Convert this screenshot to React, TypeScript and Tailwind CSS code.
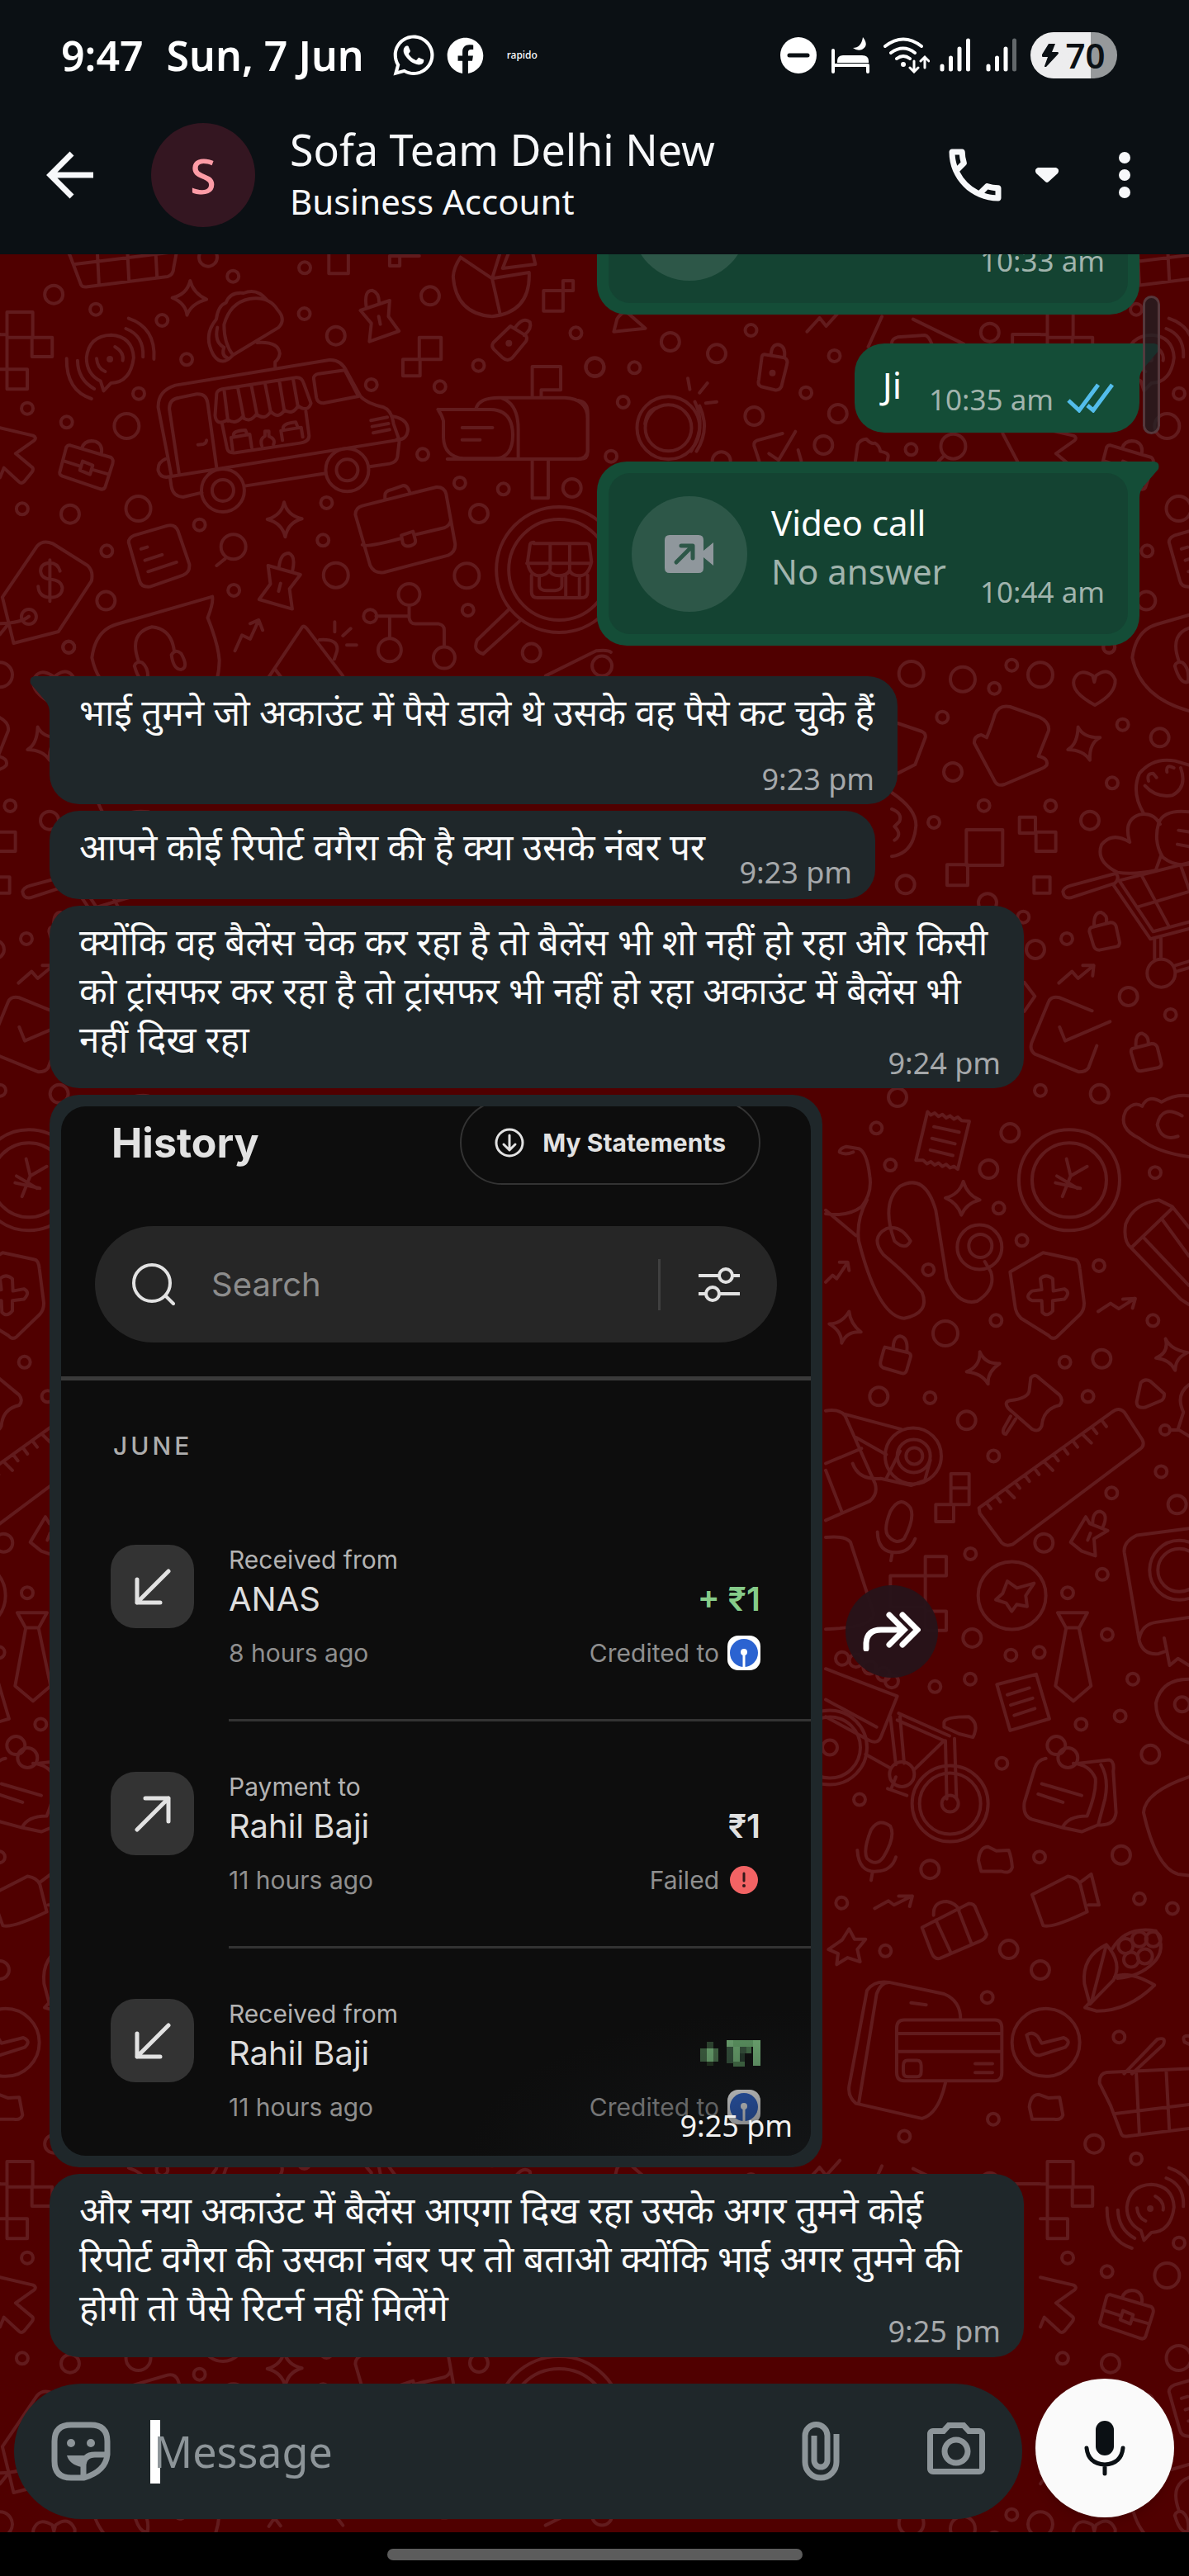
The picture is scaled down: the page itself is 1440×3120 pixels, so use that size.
import type { ReactNode } from "react";
import { FaFacebook, FaWhatsapp } from "react-icons/fa";
import { MdOutlineCall, MdOutlinePhotoCamera } from "react-icons/md";

type Sheet = {
  x: number;
  y: number;
  sx: number;
  sy: number;
  paths: string[];
  rings: [number, number, number][];
};

// Wallpaper doodles, grouped by the sheet they were sketched on.
// The whole set repeats every 1260 x 2240.
const SHEETS: Sheet[] = [
  {
    x: 0,
    y: 300,
    sx: 0.4719,
    sy: 0.3333,
    paths: [
      "M18 234h66v92h50v70h-52v-70h-64zM18 326v116h52v72h-52zM18 442H0M0 316h18",
      "M1076 326h56v80h-56zM1034 406h44v60h-44zM1395 156h50v74h-50zM1445 120h26v36h-26zM844 0v94h50V0M1000 30h26v36h-26zM1026 30h50",
      "M488 120q8 45 42 68q-40 16-50 57q-4-44-38-63q38-12 46-62z",
      "M729 925q8 48 46 60q-36 14-43 66q-8-50-46-64q36-14 43-62z",
      "M598 390L715 290Q735 260 712 225Q690 175 640 186Q590 200 575 280Q575 350 598 390Q570 435 548 390Q520 320 555 260Q560 210 580 200Q590 160 625 165Q660 145 685 190M660 345q55-5 58 40q-2 20-12 30v20",
      "M558 290q-8 50 14 70M575 362q-8 30 10 40",
      "M440 830L406 580Q405 520 450 500L845 408Q875 405 890 450L925 540Q940 565 985 580Q1005 590 1010 640L1025 700L1020 760Q1018 780 1000 785L948 796M836 820L628 866M518 890L470 906Q445 905 440 870L436 832L1025 698",
      "M460 825L435 590Q432 550 460 545L505 532Q530 530 533 565L556 800M508 716l14-2q8-4 8-14",
      "M805 475Q805 462 818 458L885 445L920 540L830 565Q815 565 812 545z",
      "M556 530Q558 518 570 514L760 472Q775 470 780 495L798 565Q790 600 765 575Q750 610 730 590Q715 625 695 595Q680 630 658 605Q640 640 622 615Q605 645 585 625Q555 650 552 610zM575 515l10 115M610 507l15 108M645 500l15 110M680 492l15 108M717 485l13 110M752 475l13 105",
      "M570 640L583 730Q586 748 605 745L770 710Q795 705 793 680L785 595M597 735l-4-45 48-12 5 48M600 685q-5-20 30-22l5 17M672 720q-6-25 8-35v-18h10v18q18 10 12 30M725 700l-4-35 52-12 4 35M727 660q-4-22 32-26l5 18",
      "M1005 612Q1045 620 1047 660Q1045 700 1018 697M952 628l42-12M955 650l42-11M958 673l42-12M425 768Q404 780 406 810Q412 840 436 832",
      "M1222 583Q1230 545 1280 545H1450Q1508 550 1508 620V745Q1508 768 1490 768H1148M1124 588H1260Q1315 590 1316 680Q1316 765 1270 766H1190Q1140 760 1138 690V630Q1135 610 1124 588M1290 548Q1330 570 1330 660V766M1186 654h78M1186 698h46M1366 545V432h73v85h-50v28M1366 770v140h41V770",
      "M912 970Q912 945 930 938L1120 870Q1140 868 1145 895L1168 1075Q1170 1105 1150 1118L985 1180Q960 1185 950 1155zM930 1080Q940 1090 1030 1056M1065 1043L1140 1018Q1155 1010 1157 990M1030 1045l4 30q6 14 20 8q14-6 12-20l-6-32zM988 915v-15q0-15 15-20l30-15q12-4 18 22",
      "M180 718L285 762Q292 770 289 785L270 870Q266 882 255 876L160 830Q150 824 154 812L170 725Q174 716 180 718M164 775l40 18M236 806l44 18M212 776l26 15-7 33-26-15zM210 728q8-32 35-24q20 12 15 46",
      "M95 1085Q110 1060 135 1075L225 1155Q240 1175 235 1210L150 1395L35 1437L6 1270zM128 1135v150M154 1175q-6-30-26-30q-24 2-24 30q2 28 26 30q28 4 30 32q-2 34-32 34q-28-2-30-40M74 1340q-20 24-74 26M20 1370L0 1405",
      "M330 1070Q330 1055 345 1045L430 1010Q450 1004 457 1030L486 1150Q488 1180 470 1190L385 1232Q362 1235 358 1210zM362 1095l16-7M372 1136l44-20M380 1177l73-34M578 1130L556 1155",
      "M925 228L1000 192L997 250L1024 303L948 341L953 275zM940 215q-6-60 15-60q18 8 18 45M972 250l4 28M688 1155L771 1188L743 1240L750 1313L665 1278L694 1222zM716 1160q4-50 25-50q18 10 10 62M720 1220l-5 28",
      "M258 485Q222 460 222 400Q228 320 285 317Q340 322 343 400Q335 490 285 492L266 520zM295 360q24 20 20 50M248 403q2 35 22 47M330 257Q400 290 395 405M323 294Q370 320 367 397M171 403Q170 520 235 549M199 410Q200 480 242 513",
      "M1310 285l40 35q4 10 0 20l-35 60q-12 16-25 0l-22-30q-8-12-2-25zM1322 290q20-40 38-20q6 25-15 48",
      "M1182 35L1263 112L1358 90Q1362 235 1263 250Q1170 240 1163 105Q1165 70 1182 35M1263 112L1283 238M1263 112L1282 25M1305 20L1290 75L1374 60L1368 25",
      "M1308 1312L1225 1425Q1212 1465 1240 1476L1335 1355M1370 1075h135q8 0 8 12l5 55q-8 50-30 50q-22 0-26-20q-6 20-27 20q-20 0-25-20q-8 20-28 20q-24-5-28-50l6-60q0-12 10-12zM1412 1077v90M1462 1077v90M1352 1147h165M1364 1190v60q0 22 16 22h112q16 0 16-22v-60M1384 1195v35q2 16 18 16h22q16-2 18-16v-35M1452 1195v76M1487 1192v78",
      "M545 1268Q548 1290 533 1345Q560 1440 563 1500Q560 1690 430 1698Q260 1660 236 1490Q245 1390 300 1368zM355 1500Q330 1400 390 1378Q440 1385 447 1465M345 1520q5-20 20-12q18 20 14 70q-20 10-34-58M440 1480q10-25 25-5q20 50 0 58q-20 0-25-53",
      "M603 1465L621 1408L642 1422L664 1353M642 1366l22-13 10 37",
      "M690 1560L775 1380Q780 1370 788 1385L880 1556M705 1530l15 28M820 1425Q870 1420 865 1465L858 1495M859 1360v36M880 1410l20-26M890 1444h25",
      "M1050 1305v40q2 22 16 22h60q14 4 14 22v56M965 1339h84M1000 1340v76",
      "M0 655L85 683Q95 690 88 700L40 748L84 800Q86 808 82 815L62 850Q54 860 48 850L10 800L0 835",
      "M180 30L208 135Q212 145 225 142L430 105Q445 100 446 70L470-110M180 30L152-50Q150-85 170-90L480-110M192 60L450 15M246-90l8 222M323-95l8 215M395-100l8 205M215-85L300-210Q325-220 315-190L235-85M480-130L370-200Q360-230 390-220L500-160",
      "M1400 1556L1530 1465Q1560 1460 1568 1470",
    ],
    rings: [
      [138, 170, 11], [1104, 175, 11], [862, 320, 11], [1527, 435, 11], [1468, 873, 11], [180, 968, 11],
      [1229, 966, 11], [272, 1283, 11], [1364, 1472, 11], [534, 35, 11], [325, 648, 15], [355, 948, 15],
      [862, 1190, 15], [1198, 1192, 15], [599, 1087, 15], [1050, 1260, 13], [1000, 1462, 14], [1140, 1490, 13],
      [246, 224, 7], [416, 264, 7], [598, 104, 7], [782, 73, 7], [781, 240, 7], [479, 406, 7], [356, 530, 7],
      [70, 584, 7], [171, 634, 7], [1478, 310, 7], [1228, 428, 7], [953, 498, 7], [1129, 505, 7], [1085, 751, 7],
      [57, 949, 7], [512, 1007, 7], [838, 927, 7], [829, 1063, 7], [1180, 855, 7], [1292, 877, 7], [274, 1102, 7],
      [600, 1245, 7], [1201, 1317, 7], [176, 1451, 7], [950, 1339, 8], [572, 882, 26], [572, 882, 13],
      [891, 808, 26], [891, 808, 13], [74, 1341, 9], [1435, 1170, 76], [1435, 1170, 61], [282, 405, 2],
      [1306, 347, 2], [1545, 1520, 12],
    ],
  },
  {
    x: 700,
    y: 300,
    sx: 0.4719,
    sy: 0.3333,
    paths: [
      "M282 475l5 40M332 492l-20 35M356 560l-28 5M172 640q5-50 30-58M300 560q30 90-10 180M312 575q28 85-8 165",
      "M478 388L530 400Q540 408 536 425L522 505Q516 520 505 517L470 505Q460 498 464 480L472 395Q474 388 478 388M495 390q2-38 18-38q20 4 17 45",
      "M92 305L173 293L130 240Q115 225 100 260zM588 305L620 255L637 285L672 230M780 250L745 360M860 260L990 350M805 350Q805 330 820 325L890 318Q900 320 908 350M1186 315h-71v40",
      "M525 675L460 700Q450 705 452 720L465 775M558 668L515 772L490 748M565 735l8 40",
      "M712 775l6-60q6-18 22-20q12 20 22 15q12 10 14 30q22 5 20 20l-5 35M940 755l-15 22M1090 675l38 102",
      "M0 555Q25 560 25 600V740Q22 765 0 768",
    ],
    rings: [
      [444, 300, 7], [658, 393, 7], [145, 436, 7], [116, 561, 7], [585, 527, 7], [855, 733, 7], [85, 758, 7],
      [43, 433, 11], [237, 342, 11], [356, 385, 11], [452, 612, 11], [667, 603, 11], [630, 717, 11],
      [1057, 308, 11], [368, 775, 11], [963, 722, 15], [232, 655, 38], [232, 655, 28], [499, 455, 2],
    ],
  },
  {
    x: 1080,
    y: 780,
    sx: 0.3333,
    sy: 0.3333,
    paths: [
      "M738 222Q650 175 662 130Q680 85 730 115L736 138L742 115Q790 80 812 130Q815 180 738 222",
      "M345 340Q365 290 375 255Q390 220 430 228L535 265Q575 285 570 315L533 408Q570 415 563 440Q555 450 540 455L410 510Q385 518 375 500L300 360Q298 335 325 330z",
      "M677 302q20 40 80 38q-40 20-37 82q-25-38-80-38q35-20 37-82",
      "M464 629h58v58h-58zM524 683h72v70h-72zM271 675h132v129h-132zM201 802h75v75h-75zM517 847h58v58h-58z",
      "M22 288L110 318Q125 325 122 340L85 438L22 470M0 540Q90 600 88 660Q80 760 0 772M0 600q40 15 28 45l-18 18q30 30 0 50",
      "M915 615Q870 540 900 470Q950 410 1030 425L1080 440M920 515Q960 560 1020 550Q1075 520 1050 450M933 498Q925 470 950 470l12 15M1000 465Q995 435 1025 450",
      "M960 822Q880 840 820 830Q740 790 762 730Q800 680 865 720Q840 640 900 620Q950 610 975 655M1080 610Q990 600 970 650Q950 720 985 775Q1030 810 1080 800M978 770L960 820M1042 677l38 6M1038 728l42 8",
      "M815 835Q830 850 810 870L650 922Q625 925 622 900Q625 885 650 878L810 835zM805 875L940 1072L1080 1035M830 865L950 1045L1080 1010M825 860L1080 795M910 845L1005 1022M895 955L1080 900M1050 805L1080 890M955 1070v75M978 1068v75M1030 1168l50-15M1035 1190l45-13",
      "M725 1030L795 1012Q810 1012 815 1025L828 1085Q828 1098 815 1100L755 1112Q738 1112 733 1095L718 1045Q718 1033 725 1030M735 1020Q735 975 760 975Q785 985 780 1012",
      "M875 1470L945 1452Q960 1452 965 1465L980 1525Q980 1538 967 1540L905 1552Q890 1552 885 1535L870 1485Q868 1473 875 1470M887 1460Q885 1415 910 1415Q935 1425 932 1452",
      "M607 1232L655 1190L677 1215L734 1168M694 1168h40l-4 38",
      "M728 1333L610 1285Q580 1278 570 1300L508 1450Q500 1475 520 1490L680 1555Q705 1555 715 1540L745 1460M610 1392L630 1442L793 1372M482 1230L520 1280L482 1335",
    ],
    rings: [
      [71, 108, 15], [258, 128, 15], [436, 77, 7], [540, 112, 15], [373, 161, 7], [184, 266, 7], [222, 465, 11],
      [839, 293, 7], [974, 340, 11], [801, 505, 7], [577, 588, 7], [335, 587, 7], [153, 648, 7], [720, 641, 11],
      [50, 874, 11], [348, 940, 11], [478, 992, 7], [522, 1110, 11], [636, 1071, 7], [860, 1281, 11],
      [1013, 1347, 7], [979, 1196, 17], [790, 12, 7],
    ],
  },
  {
    x: 1000,
    y: 1300,
    sx: 0.3333,
    sy: 0.829,
    paths: [
      "M875 125l15 25 60-14M890 150l-30 30M840 150l75 18M835 160l90 8",
      "M670 290L790 262L905 272Q920 273 923 285L939 335Q940 345 925 352L840 385Q825 390 810 383L710 358Q690 350 688 340zM780 300q20-8 45 0l2 18 40-3q25 5 0 15l-42 2v15q-20 10-38 2l-2-17-35 0q-30-5 0-14l35-2z",
      "M370 56l12 5 14-3 14 5 14-3 14 5 14-3 14 5 14-3 14 5 28 1L480 140l-14-4-14 2-14-5-14 3-14-5-14 3-14-5-14 3-14-5-26 0zM393 78l92 8M386 95l84 8M380 112l82 8",
      "M500 158q15 20 60 27q-50 5-67 22q-15-18-58-25q50-5 65-24M85 348q5 18 43 30q-50-2-70 16q0-18-45-28q45 0 72-18M560 407q20 18 72 17q-45 12-42 30q-22-16-78-18q50-8 48-29M1235 388q20 16 80 20q-45 8-45 26q-20-16-70-18q48-8 35-28",
      "M0 305l25-10 15 5 40-24M50 276h30l5 12M990 348l45-12 30 8 58-15M1080 330l45-1-10 14M178 1220l50-11 20 6 65-13M265 1202h50l-10 15",
      "M215 400L300 408Q312 410 308 415L295 433Q290 440 275 438L208 430Q195 427 200 420L210 405zM245 403q0-18 25-19q30 2 25 22",
      "M0 205Q80 210 130 195Q170 175 160 150Q150 115 120 110L75 107Q50 110 50 115Q70 120 100 115M0 200L110 237M150 185Q110 215 120 245Q190 355 285 358Q380 350 350 320Q300 295 210 265Q160 240 220 227Q270 220 308 245Q290 260 250 245Q200 190 270 165Q360 145 400 200L440 300Q480 340 550 333Q620 315 600 290L578 275",
      "M1320 122Q1200 115 1140 95Q1060 80 1090 55Q1120 40 1150 48Q1170 30 1220 42Q1270 30 1320 33M1295 62Q1220 45 1205 75Q1220 100 1280 92",
      "M1115 253L1260 197M1320 225L1260 195L1210 185Q1120 190 1090 220Q1080 245 1110 255L1290 330L1320 338M1155 240l165 70M1220 212l100 55",
      "M557 635L1040 495Q1065 487 1085 495L1150 535Q1160 543 1145 548L680 688Q655 692 640 686L560 643zM585 628l15 8M620 618l15 8M655 608l30 12M690 598l15 8M725 588l15 8M760 578l15 8M795 568l30 12M830 558l15 8M865 548l15 8M900 538l15 8M935 528l30 12M970 518l15 8M1005 508l15 8",
      "M745 445Q760 438 775 445L850 470Q865 478 850 485Q790 490 785 515Q775 525 750 520L665 490Q645 480 670 478Q740 475 740 462zM690 505l-35 22q-15 0-8-8l25-18",
      "M890 685L945 648L960 658L1025 668L975 680L980 705L930 698zM970 658q0-18 28-18q30 4 10 22M962 672l-10 10",
      "M660 742l35 10 62-7-30 18 5 16-38-3-18 10-20-12-38-5 25-9z",
      "M843 788h108l-30 22h-48zM873 812L835 895L900 917L964 895L921 812",
      "M622 893L765 878L813 943L670 960zM660 908l80-10M672 923l80-10M685 938l75-10",
      "M400 630h65v25h-65zM455 585h66v45h-66zM455 606h66M362 706h76v28h-76zM362 706v80h76v28h-76v-28M362 734H235v46h127",
      "M235 640Q270 615 308 635Q325 650 285 680Q255 690 225 675Q210 665 235 640M188 670Q190 700 255 700Q305 700 325 680M242 700l-5 12M165 1105q30-18 70-5q20 15-25 45q-25 15-60 2q-15-12 15-42M115 1135Q120 1168 185 1166Q240 1165 255 1145M170 1167l-5 12",
      "M0 493Q50 490 70 500L180 600Q190 615 160 625L0 653M70 498L275 520M110 532l110 25M0 570l130-22M0 580l60 62M98 570Q120 595 200 592L310 602L360 595L380 565M220 592l50-40",
      "M0 678Q70 675 90 685L175 790Q170 810 0 812",
      "M145 995L235 1015M235 940L255 1010M270 940L285 1008M260 945L430 975L320 1018M265 935L450 968M435 975L440 1060M468 972L475 1058M430 948Q435 940 520 940Q560 950 535 970L485 965L430 955zM225 1045l70 10M240 1043l15-15",
      "M0 870L260 910L200 970Q190 980 160 975L0 940M0 915L185 955",
      "M800 1001Q770 1003 760 1015L722 1065Q715 1085 750 1090L860 1102Q880 1085 950 1085Q985 1050 980 1030Q960 1010 900 1008M920 1008L1030 1003Q1050 1005 1045 1020L1055 1080Q1050 1100 990 1098L930 1108L860 1102M1000 1010Q1030 1030 1015 1060L990 1098M785 1038l145 17M772 1053l90 12",
      "M555 1150Q560 1130 590 1130L620 1136L665 1135Q675 1145 678 1160Q670 1170 640 1166L565 1166zM740 1510Q745 1492 775 1492L810 1497L850 1496L862 1522Q855 1530 830 1528L750 1528z",
      "M750 1200L880 1173Q915 1175 925 1185L950 1225Q820 1250 790 1245zM925 1182L965 1170L993 1215L955 1215",
      "M350 1248L520 1213Q540 1213 545 1220L585 1258Q580 1265 560 1268L415 1293Q395 1295 385 1285zM400 1237l55 48M480 1220l50 52M392 1230Q390 1210 440 1210Q470 1212 485 1222",
      "M10 1280l50-14 25-16 20 15h40l-30 15 10 18-45-6-40 10 5-16z",
      "M940 1330Q930 1290 1020 1273Q1080 1300 1045 1325L960 1360L940 1330M1020 1273Q990 1320 965 1358M1050 1320Q1100 1310 1195 1332Q1100 1370 985 1370L942 1365L965 1355M1040 1280Q1090 1245 1200 1253Q1240 1280 1190 1300Q1140 1320 1060 1322",
      "M258 1395Q258 1383 285 1383H615Q640 1383 640 1395V1460Q640 1472 615 1472H285Q258 1472 258 1460zM258 1403h382M258 1429h382M282 1450q0-8 15-8h35q15 0 15 8v8q0 8-15 8h-35q-15 0-15-8zM543 1447h63M543 1460h63M435 1475Q410 1520 350 1527L110 1505Q80 1495 85 1480L150 1340Q175 1325 230 1328L430 1345Q490 1355 490 1382M120 1505L185 1345Q200 1328 230 1328M310 1358l55 3",
      "M730 1405q20-6 40 2l15 10 80-8q30 5 5 14l-95 12q-20 0-30-10z",
      "M1320 665L1130 675Q1080 685 1085 700L1140 830Q1155 850 1210 848L1230 845M1140 825Q1150 805 1200 802L1320 795M1230 825l20 40 30-10 40 10",
      "M1320 978Q1200 960 1200 920Q1220 885 1320 885M1320 1028Q1160 1050 1155 1080Q1200 1160 1280 1170L1320 1172",
      "M1130 480L1145 452Q1160 445 1180 450L1230 468Q1232 475 1220 478L1160 488Q1130 490 1130 480M1320 455Q1270 470 1300 495L1280 520L1320 530M1250 521h30",
    ],
    rings: [
      [184, 80, 7], [235, 134, 7], [780, 25, 7], [629, 197, 7], [713, 244, 7], [1197, 145, 7], [993, 281, 7],
      [373, 287, 7], [619, 361, 7], [1189, 361, 7], [869, 422, 7], [379, 474, 7], [953, 472, 7], [610, 559, 7],
      [1219, 582, 7], [1039, 613, 7], [526, 702, 7], [1005, 732, 7], [879, 759, 7], [1023, 820, 7], [673, 850, 7],
      [776, 846, 7], [525, 885, 7], [397, 896, 7], [928, 951, 7], [1116, 885, 7], [1070, 939, 7], [640, 1008, 7],
      [123, 1061, 7], [777, 1145, 7], [58, 1212, 7], [217, 1282, 7], [1140, 1206, 7], [1260, 1220, 7],
      [587, 1350, 7], [1066, 1408, 7], [609, 1528, 7], [286, 1553, 7], [261, 35, 11], [995, 30, 11],
      [670, 87, 11], [592, 140, 11], [512, 507, 11], [1003, 417, 11], [793, 686, 11], [532, 825, 11],
      [1277, 630, 11], [379, 1163, 11], [1074, 1142, 11], [1180, 995, 11], [665, 1280, 11], [780, 1310, 11],
      [193, 472, 11], [435, 380, 15], [885, 156, 61], [885, 156, 45], [559, 254, 27], [562, 252, 14],
      [677, 763, 41], [318, 559, 34], [320, 559, 20], [322, 559, 10], [452, 1067, 46], [452, 1067, 37],
      [452, 1067, 10], [15, 985, 45], [15, 985, 37], [15, 985, 9], [277, 1024, 15], [60, 855, 8], [110, 858, 8],
      [160, 868, 8], [210, 878, 8], [240, 888, 8], [838, 982, 11], [880, 1000, 12], [1090, 1275, 9],
      [1140, 1265, 9], [1190, 1265, 9], [1110, 1295, 9], [1160, 1290, 9], [800, 1416, 41], [1285, 726, 36],
      [1285, 726, 26], [1295, 922, 9], [1233, 521, 6],
    ],
  },
];

function Wallpaper() {
  return (
    <svg className="absolute inset-0 w-full h-full" aria-hidden="true">
      <defs>
        <g id="doodles" fill="none" stroke="#621b1d" strokeWidth="4" strokeLinecap="round" strokeLinejoin="round">
          {SHEETS.map((s, i) => (
            <g key={i} transform={`translate(${s.x} ${s.y}) scale(${s.sx} ${s.sy})`}>
              {s.paths.map((d) => (
                <path key={d} d={d} vectorEffect="non-scaling-stroke" />
              ))}
              {s.rings.map(([x, y, r]) => (
                <ellipse key={`${x}-${y}-${r}`} cx={x} cy={y} rx={r / s.sx} ry={r / s.sy} vectorEffect="non-scaling-stroke" />
              ))}
            </g>
          ))}
        </g>
      </defs>
      <g transform="translate(0 -308)">
        <use href="#doodles" />
        <use href="#doodles" x="-1260" />
        <use href="#doodles" x="1260" />
        <use href="#doodles" y="2240" />
        <use href="#doodles" x="-1260" y="2240" />
        <use href="#doodles" x="1260" y="2240" />
      </g>
    </svg>
  );
}

function StatusBar() {
  return (
    <div className="h-[134px] pl-[74px] pr-[87px] flex items-center justify-between text-white">
      <div className="flex items-center">
        <span className="text-[50px] font-semibold">9:47</span>
        <span className="text-[50px] font-semibold ml-7">Sun, 7 Jun</span>
        <FaWhatsapp className="w-[56px] h-[56px] ml-8" />
        <FaFacebook className="w-[45px] h-[45px] ml-3" />
        <span className="text-[12px] ml-7 font-medium">rapido</span>
      </div>
      <div className="flex items-center">
        <svg viewBox="0 0 44 44" className="w-11 h-11">
          <circle cx="22" cy="22" r="22" fill="#fff" />
          <path d="M11 22h22" stroke="#0b1014" strokeWidth="5" strokeLinecap="round" />
        </svg>
        <svg viewBox="0 0 46 44" className="w-[46px] h-11 ml-[18px]" fill="#fff">
          <path d="M0 16q0-2 2-2t2 2v16h40q2 0 2 2v8q0 2-2 2t-2-2v-6H4v6q0 2-2 2t-2-2zM7 31v-2q0-7 7-7h23q8 0 8 7v2zM38 0q8 10-1 15q-6 2-11-2q10 0 12-13" />
        </svg>
        <svg viewBox="0 0 56 44" className="w-14 h-11 ml-[17px]" fill="none" stroke="#fff" strokeWidth="4" strokeLinecap="round">
          <path d="M2 11Q24-6 46 11M9 19Q24 8 38 19M16 26Q24 20 32 26" />
          <circle cx="24" cy="33" r="3" fill="#fff" stroke="none" />
          <path d="M37 29v11M32 37l5 5 5-5M50 37V25M45 29l5-5 5 5" strokeWidth="3" />
        </svg>
        <svg viewBox="0 0 38 42" className="w-[38px] h-[42px] ml-3" stroke="#fff" strokeWidth="5" strokeLinecap="round">
          <path d="M3 34v4M13.500 24v14M24 13v25M34.500 3v35" />
        </svg>
        <svg viewBox="0 0 38 42" className="w-[38px] h-[42px] ml-[18px]" stroke="#fff" strokeWidth="5" strokeLinecap="round">
          <path d="M3 34v4M13.500 24v14M24 13v25" />
          <path d="M34.500 3v35" stroke="#63686b" />
        </svg>
        <div className="ml-4 w-[105px] h-14 rounded-full bg-linear-to-r from-[#ededee] from-70% to-[#96999b] to-70% flex items-center justify-center gap-2 text-[#0b1014]">
          <svg viewBox="0 0 20 28" className="w-5 h-7" fill="currentColor">
            <path d="M8 0h8l-4 10h7q2 1 0 3L5 28q-2 1-2-1l4-11H1q-2-1-1-3z" />
          </svg>
          <span className="text-[42px] leading-[56px] font-semibold">70</span>
        </div>
      </div>
    </div>
  );
}

function ChatHeader() {
  return (
    <div className="h-[156px] mb-[18px] flex items-center text-[#f7f8fa]">
      <button aria-label="Back" className="ml-14 w-[58px] h-[58px]">
        <svg viewBox="0 0 58 58" fill="none" stroke="currentColor" strokeWidth="7">
          <path d="M57 29H6M31 3L5 29l26 26" />
        </svg>
      </button>
      <div className="ml-[69px] w-[126px] h-[126px] rounded-full bg-[#341621] text-[#fd9ba6] text-[58px] font-medium flex items-center justify-center">
        S
      </div>
      <div className="ml-[42px] pb-1 flex-1 flex flex-col">
        <h1 className="text-[52px] leading-[68px]">Sofa Team Delhi New</h1>
        <p className="text-[42px] leading-[58px]">Business Account</p>
      </div>
      <button aria-label="Call" className="flex items-center gap-[31px]">
        <MdOutlineCall className="w-[84px] h-[84px]" />
        <svg viewBox="0 0 28 18" className="w-7 h-[18px]" fill="currentColor">
          <path d="M3 0h22q5 2 2 7L16 17q-2 2-4 0L1 7Q-2 2 3 0" />
        </svg>
      </button>
      <button aria-label="More options" className="ml-[73px] mr-[71px] flex flex-col gap-[7px]">
        <span className="w-[14px] h-[14px] rounded-full bg-current" />
        <span className="w-[14px] h-[14px] rounded-full bg-current" />
        <span className="w-[14px] h-[14px] rounded-full bg-current" />
      </button>
    </div>
  );
}

function Tail({ side, className }: { side: "left" | "right"; className: string }) {
  return (
    <svg
      viewBox="0 0 26 44"
      className={side === "left" ? `absolute top-0 -left-6 w-[26px] h-11 ${className}` : `absolute top-0 -right-6 w-[26px] h-11 ${className}`}
      fill="currentColor"
    >
      {side === "left" ? <path d="M26 0H6Q-1 1 1 9L19 30Q24 36 24 44H26z" /> : <path d="M0 0h20q7 1 5 9L7 30Q2 36 2 44H0z" />}
    </svg>
  );
}

function CallCard({ time }: { time: string }) {
  return (
    <div className="relative self-end shrink-0 w-[657px] rounded-[36px] rounded-tr-none bg-[#144d37] p-[14px]">
      <Tail side="right" className="text-[#144d37]" />
      <div className="h-[195px] rounded-[26px] bg-[#144332] flex items-center px-7">
        <div className="w-[140px] h-[140px] rounded-full bg-[#2d5748] flex items-center justify-center">
          <svg viewBox="0 0 60 46" className="w-[60px] h-[46px]">
            <path d="M6 0h35q6 0 6 6v13L59 9v28L47 27v13q0 6-6 6H6q-6 0-6-6V6q0-6 6-6" fill="#8f979c" />
            <path d="M14 33L33 14M20 13h14v15" fill="none" stroke="#2d5748" strokeWidth="5" strokeLinecap="round" strokeLinejoin="round" />
          </svg>
        </div>
        <div className="ml-[29px] pb-[18px] flex-1 text-[42px] leading-[59px]">
          <p className="text-white">Video call</p>
          <p className="text-[#a1b4ad]">No answer</p>
        </div>
        <time className="self-end mb-[27px] text-[35px] leading-[48px] text-[#a1b4ad]">{time}</time>
      </div>
    </div>
  );
}

function Bubble({ lines, time, className, timeClass, tail }: { lines: string[]; time: string; className: string; timeClass: string; tail?: boolean }) {
  return (
    <div className={`relative self-start shrink-0 bg-[#1f272a] pl-9 pr-7 ${className}`}>
      {tail && <Tail side="left" className="text-[#1f272a]" />}
      <p className="text-[44px] leading-[59px] text-[#fafafa] whitespace-nowrap">
        {lines.map((line) => (
          <span key={line} className="block">
            {line}
          </span>
        ))}
      </p>
      <time className={`text-[36px] leading-[48px] text-[#a5a8aa] ${timeClass}`}>{time}</time>
    </div>
  );
}

function BankIcon() {
  return (
    <svg viewBox="0 0 40 42" className="w-10 h-[42px]">
      <rect width="40" height="42" rx="13" fill="#fff" />
      <circle cx="20" cy="21" r="17" fill="#2b63d1" />
      <path d="M20 20v18" stroke="#fff" strokeWidth="3" />
      <circle cx="20" cy="20" r="4" fill="#fff" />
    </svg>
  );
}

function FailedIcon() {
  return (
    <svg viewBox="0 0 40 42" className="w-10 h-[42px]">
      <circle cx="20" cy="21" r="17" fill="#f26364" />
      <path d="M20 13v9" stroke="#35191a" strokeWidth="3" strokeLinecap="round" />
      <circle cx="20" cy="28" r="2" fill="#35191a" />
    </svg>
  );
}

const MOSAIC: [number, number, number, number, string][] = [
  [0, 10, 8, 16, "#3d6040"], [8, 2, 8, 8, "#2f4731"], [8, 10, 8, 16, "#6da871"], [8, 26, 8, 5, "#22331f"], [16, 10, 6, 16, "#456b47"],
  [32, 0, 8, 8, "#6fa873"], [40, 0, 24, 8, "#5f9a64"], [32, 8, 8, 20, "#33503a"], [40, 8, 8, 18, "#6aa56e"], [48, 8, 8, 8, "#35503a"],
  [56, 8, 6, 8, "#457049"], [40, 26, 14, 6, "#467349"], [48, 16, 6, 10, "#24382a"], [64, 0, 9, 31, "#73b077"],
];

function Amount({ kind }: { kind: "in" | "out" | "hidden" }) {
  if (kind === "hidden") {
    return (
      <svg viewBox="0 0 73 32" className="w-[73px] h-8" role="img" aria-label="+ ₹1">
        {MOSAIC.map(([x, y, w, h, c]) => (
          <rect key={`${x}-${y}`} x={x} y={y} width={w} height={h} fill={c} />
        ))}
      </svg>
    );
  }
  return <span className={kind === "in" ? "text-[40px] font-semibold text-[#86cb89]" : "text-[40px] font-semibold text-[#e0e0e0]"}>{kind === "in" ? "+ ₹1" : "₹1"}</span>;
}

const TRANSACTIONS = [
  { label: "Received from", name: "ANAS", ago: "8 hours ago", amount: "in", note: "Credited to" },
  { label: "Payment to", name: "Rahil Baji", ago: "11 hours ago", amount: "out", note: "Failed" },
  { label: "Received from", name: "Rahil Baji", ago: "11 hours ago", amount: "hidden", note: "Credited to" },
] as const;

function HistoryPicture() {
  return (
    <div className="relative overflow-hidden rounded-[30px] bg-[#0d0d0d] font-[Inter,sans-serif]">
      <div className="-mt-[7px] pl-[61px] pr-[61px] flex items-center justify-between">
        <h2 className="text-[50px] font-bold text-[#e2e2e2]">History</h2>
        <button className="h-[102px] px-10 flex items-center gap-[22px] rounded-full border-2 border-[#333] text-[30px] font-bold text-[#e2e2e2]">
          <svg viewBox="0 0 36 36" className="w-9 h-9" fill="none" stroke="currentColor" strokeWidth="3" strokeLinecap="round" strokeLinejoin="round">
            <circle cx="18" cy="18" r="16" />
            <path d="M18 9v17M11 20l7 7 7-7" />
          </svg>
          My Statements
        </button>
      </div>
      <div className="mt-[50px] mx-[41px] h-[141px] rounded-full bg-[#262626] flex items-center pl-[45px] pr-[45px]">
        <svg viewBox="0 0 52 52" className="w-[52px] h-[52px]" fill="none" stroke="#e2e2e2" strokeWidth="4" strokeLinecap="round">
          <circle cx="24" cy="24" r="22" />
          <path d="M41 40l9 9" />
        </svg>
        <input
          aria-label="Search"
          placeholder="Search"
          className="ml-[44px] min-w-0 flex-1 bg-transparent text-[40px] text-white placeholder:text-[#8c8c8c] outline-none"
        />
        <span className="w-[3px] h-[62px] bg-[#404040]" />
        <svg viewBox="0 0 50 44" className="ml-[46px] w-[50px] h-11" fill="none" stroke="#e2e2e2" strokeWidth="4">
          <path d="M0 11h25M41 11h9M0 33h9M25 33h25" />
          <circle cx="33" cy="11" r="8" />
          <circle cx="17" cy="33" r="8" />
        </svg>
      </div>
      <div className="mt-[41px] h-[5px] bg-[#3a3a3a]" />
      <p className="mt-[61px] mb-[41px] pl-[63px] text-[30px] leading-9 tracking-[4px] font-medium text-[#adadad]">JUNE</p>
      {TRANSACTIONS.map((t, i) => (
        <div key={i} className="flex">
          <div className="w-[203px] pl-[60px] pt-[61px]">
            <div className="w-[101px] h-[101px] rounded-[30px] bg-[#333] flex items-center justify-center">
              <svg viewBox="0 0 44 44" className="w-11 h-11" fill="none" stroke="#e2e2e2" strokeWidth="5" strokeLinecap="round" strokeLinejoin="round">
                {t.amount === "out" ? <path d="M3 41L41 3M13 3h28v28" /> : <path d="M41 3L3 41M3 13v28h28" />}
              </svg>
            </div>
          </div>
          <div className={i < 2 ? "flex-1 pt-[59px] pb-[60px] pr-[61px] border-b-[3px] border-[#333]" : "flex-1 pt-[59px] pb-[39px] pr-[61px]"}>
            <p className="text-[30px] leading-10 text-[#b3b3b3]">{t.label}</p>
            <div className="mt-[2px] h-[52px] flex items-center justify-between">
              <span className="text-[40px] text-[#dedede]">{t.name}</span>
              <Amount kind={t.amount} />
            </div>
            <div className="mt-[19px] h-10 flex items-center text-[30px] text-[#8f8f8f]">
              <span className="flex-1">{t.ago}</span>
              <span className="mr-[10px]">{t.note}</span>
              {t.note === "Failed" ? <FailedIcon /> : <BankIcon />}
            </div>
          </div>
        </div>
      ))}
      <div className="absolute right-0 bottom-0 w-[420px] h-[180px] bg-radial-[at_100%_100%] from-[#15181a]/70 to-transparent to-70%" />
      <time className="absolute right-[22px] bottom-3 text-[36px] leading-[48px] text-[#f2f2f2] font-['Noto_Sans',sans-serif]">9:25 pm</time>
    </div>
  );
}

function RoundIcon({ label, className, children }: { label: string; className: string; children: ReactNode }) {
  return (
    <button aria-label={label} className={`shrink-0 flex items-center justify-center ${className}`}>
      {children}
    </button>
  );
}

function Composer() {
  return (
    <div className="relative shrink-0 mt-[26px] mb-4 pl-[17px] pr-[18px] flex items-end">
      <div className="flex-1 h-[164px] rounded-full bg-[#1f272a] flex items-center pl-[45px] pr-[44px] text-[#8d9599]">
        <RoundIcon label="Emoji" className="w-[72px] h-[72px]">
          <svg viewBox="0 0 72 72" fill="none" stroke="currentColor" strokeWidth="7" strokeLinejoin="round">
            <path d="M40 68H24Q4 68 4 48V24Q4 4 24 4h24q20 0 20 20v16Q66 60 40 68z" />
            <path d="M39 68V54q0-14 14-14h15" />
            <circle cx="24" cy="26" r="5" fill="currentColor" stroke="none" />
            <circle cx="48" cy="26" r="5" fill="currentColor" stroke="none" />
            <path d="M19 41h27q-9 4-9 14Q22 52 19 41" fill="currentColor" stroke="none" />
          </svg>
        </RoundIcon>
        <span className="ml-12 w-3 h-[77px] bg-white" />
        <input
          aria-label="Message"
          placeholder="Message"
          className="relative -ml-2 min-w-0 flex-1 bg-transparent text-[52px] text-white placeholder:text-[#8d9599] outline-none"
        />
        <RoundIcon label="Attach" className="w-[46px] h-[72px] mr-[105px]">
          <svg viewBox="0 0 46 72" fill="none" stroke="currentColor" strokeWidth="7">
            <path d="M42 15v34a19 19 0 0 1-38 0V17a13 13 0 0 1 27 0v30a8 8 0 0 1-16 0V17" />
          </svg>
        </RoundIcon>
        <RoundIcon label="Camera" className="w-[72px] h-[72px]">
          <MdOutlinePhotoCamera className="w-[84px] h-[84px] shrink-0" />
        </RoundIcon>
      </div>
      <RoundIcon label="Record voice message" className="ml-4 mb-[2px] w-[168px] h-[168px] rounded-full bg-[#fafafa] shadow-lg">
        <svg viewBox="0 0 50 68" className="w-[50px] h-[68px]" fill="none" stroke="#0b1014" strokeWidth="5" strokeLinecap="round">
          <rect x="14" y="1" width="22" height="42" rx="11" fill="#0b1014" stroke="none" />
          <path d="M3 34q2 19 22 20q20-1 22-20M25 55v10" />
        </svg>
      </RoundIcon>
    </div>
  );
}

export default function App() {
  return (
    <div className="h-screen w-full flex flex-col bg-black font-['Noto_Sans','Noto_Sans_Devanagari',sans-serif]">
      <header className="shrink-0 bg-[#0b1014]">
        <StatusBar />
        <ChatHeader />
      </header>

      <main className="relative flex-1 min-h-0 overflow-hidden bg-[#500000] flex flex-col">
        <Wallpaper />
        <div className="relative flex-1 min-h-0 overflow-hidden flex flex-col justify-end gap-2 pl-[60px] pr-[60px]">
          <CallCard time="10:33 am" />
          <div className="relative self-end shrink-0 mt-[27px] h-[108px] rounded-[36px] rounded-tr-none bg-[#144d37] pl-[34px] pr-[30px] flex items-center">
            <Tail side="right" className="text-[#144d37]" />
            <p className="text-[44px] leading-[59px] pb-2 text-white">Ji</p>
            <time className="ml-[33px] mt-7 text-[35px] leading-[48px] text-[#a1b4ad]">10:35 am</time>
            <svg viewBox="0 0 58 36" className="ml-4 mt-6 w-[58px] h-9" fill="none" stroke="#53bdeb" strokeWidth="5">
              <path d="M2 21l13 12L38 2M25 27l7 6L55 2" />
            </svg>
          </div>
          <div className="mt-[27px] mb-[29px] shrink-0 flex flex-col">
            <CallCard time="10:44 am" />
          </div>
          <Bubble
            tail
            lines={["भाई तुमने जो अकाउंट में पैसे डाले थे उसके वह पैसे कट चुके हैं"]}
            time="9:23 pm"
            className="w-[1027px] h-[155px] pt-[14px] rounded-[36px] rounded-tl-none flex flex-col"
            timeClass="self-end mt-7"
          />
          <Bubble
            lines={["आपने कोई रिपोर्ट वगैरा की है क्या उसके नंबर पर"]}
            time="9:23 pm"
            className="w-[1000px] h-[107px] pt-[14px] rounded-[36px] flex justify-between"
            timeClass="self-end mb-2"
          />
          <Bubble
            lines={[
              "क्योंकि वह बैलेंस चेक कर रहा है तो बैलेंस भी शो नहीं हो रहा और किसी",
              "को ट्रांसफर कर रहा है तो ट्रांसफर भी नहीं हो रहा अकाउंट में बैलेंस भी",
              "नहीं दिख रहा",
            ]}
            time="9:24 pm"
            className="w-[1180px] h-[221px] pt-[14px] rounded-[36px] flex flex-col"
            timeClass="self-end -mt-6"
          />
          <div className="shrink-0 flex items-center gap-7">
            <div className="w-[936px] rounded-[36px] bg-[#1f272a] p-[14px]">
              <HistoryPicture />
            </div>
            <RoundIcon label="Forward" className="w-28 h-28 rounded-full bg-[#261319]/95">
              <svg viewBox="0 0 70 48" className="w-[70px] h-12" fill="none" stroke="#fff" strokeWidth="7" strokeLinecap="round">
                <path d="M4 45V38Q5 22 22 22h26M32 4l18 18-18 18M48 4l18 18-18 18" />
              </svg>
            </RoundIcon>
          </div>
          <Bubble
            lines={[
              "और नया अकाउंट में बैलेंस आएगा दिख रहा उसके अगर तुमने कोई",
              "रिपोर्ट वगैरा की उसका नंबर पर तो बताओ क्योंकि भाई अगर तुमने की",
              "होगी तो पैसे रिटर्न नहीं मिलेंगे",
            ]}
            time="9:25 pm"
            className="w-[1180px] h-[222px] pt-[14px] rounded-[36px] flex flex-col"
            timeClass="self-end -mt-6"
          />
        </div>
        <Composer />
        <div className="absolute right-[35px] top-[50px] w-[21px] h-[168px] rounded-full border-[3px] border-[#5f4044]/80 bg-[#1d2226]/70" />
      </main>

      <footer className="shrink-0 h-[53px] flex items-center justify-center">
        <div className="w-[503px] h-[14px] rounded-full bg-[#5c5c5c]" />
      </footer>
    </div>
  );
}
